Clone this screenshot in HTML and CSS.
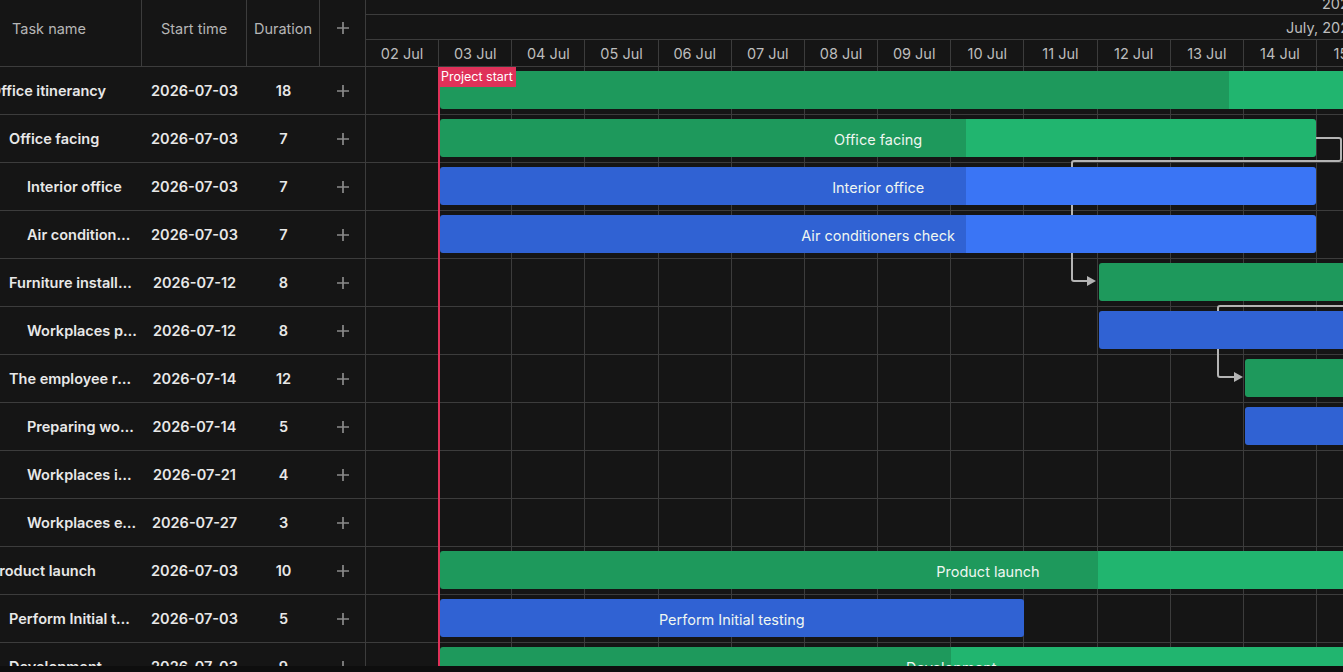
FILE: index.html
```
<!DOCTYPE html>
<html lang="en">
<head>
    <meta charset="UTF-8">
    <meta name="viewport" content="width=device-width, initial-scale=1.0">
    <title>Gantt</title>
    <link rel="stylesheet" href="styles.css">
</head>
<body>
    <div class="gantt">
        <div class="grid">
            <div class="grid-header">
                <div class="col col-name">Task name</div>
                <div class="col col-start">Start time</div>
                <div class="col col-dur">Duration</div>
                <div class="col col-add">
                    <svg class="plus" width="14" height="14" viewBox="0 0 14 14"><path d="M7 1v12M1 7h12"/></svg>
                </div>
            </div>
            <div class="grid-body" id="gridBody"></div>
        </div>

        <div class="chart">
            <div class="scale">
                <div class="scale-row scale-year"><span>2026</span></div>
                <div class="scale-row scale-month"><span>July, 2026</span></div>
                <div class="scale-row scale-days" id="scaleDays"></div>
            </div>
            <div class="chart-body" id="chartBody">
                <svg class="links" width="1200" height="640">
                    <path d="M950 71H973Q975 71 975 73V92Q975 94 973 94H708Q706 94 706 96V212Q706 214 708 214H722"/>
                    <polygon points="721,209 730,214 721,219"/>
                    <path d="M990 239H854Q852 239 852 241V308Q852 310 854 310H869"/>
                    <polygon points="868,305 877,310 868,315"/>
                </svg>
                <div class="marker"><span>Project start</span></div>
            </div>
        </div>
    </div>

    <script>
        const DAY = 73.17;
        const DAYS = 16;

        // from / to are day offsets from 02 Jul, p is progress in %
        const tasks = [
            { name: "Office itinerancy", start: "2026-07-03", dur: 18, lvl: 0, type: "summary", from: 1, to: 30, p: 37.2 },
            { name: "Office facing", start: "2026-07-03", dur: 7, lvl: 1, type: "summary", from: 1, to: 13, p: 60 },
            { name: "Interior office", start: "2026-07-03", dur: 7, lvl: 2, type: "task", from: 1, to: 13, p: 60 },
            { name: "Air conditioners check", start: "2026-07-03", dur: 7, lvl: 2, type: "task", from: 1, to: 13, p: 60 },
            { name: "Furniture installation", start: "2026-07-12", dur: 8, lvl: 1, type: "summary", from: 10, to: 20, p: 60 },
            { name: "Workplaces preparation", start: "2026-07-12", dur: 8, lvl: 2, type: "task", from: 10, to: 20, p: 60 },
            { name: "The employee relocation", start: "2026-07-14", dur: 12, lvl: 1, type: "summary", from: 12, to: 24, p: 40 },
            { name: "Preparing workplaces", start: "2026-07-14", dur: 5, lvl: 2, type: "task", from: 12, to: 18, p: 50 },
            { name: "Workplaces importation", start: "2026-07-21", dur: 4, lvl: 2, type: "task", from: 19, to: 23, p: 0 },
            { name: "Workplaces exportation", start: "2026-07-27", dur: 3, lvl: 2, type: "task", from: 25, to: 28, p: 0 },
            { name: "Product launch", start: "2026-07-03", dur: 10, lvl: 0, type: "summary", from: 1, to: 16, p: 60 },
            { name: "Perform Initial testing", start: "2026-07-03", dur: 5, lvl: 1, type: "task", from: 1, to: 9, p: 100 },
            { name: "Development", start: "2026-07-03", dur: 9, lvl: 1, type: "summary", from: 1, to: 15, p: 50 }
        ];

        const plusIcon = '<svg class="plus" width="14" height="14" viewBox="0 0 14 14"><path d="M7 1v12M1 7h12"/></svg>';

        const gridBody = document.getElementById('gridBody');
        const chartBody = document.getElementById('chartBody');
        const scaleDays = document.getElementById('scaleDays');

        for (let d = 0; d < DAYS; d++) {
            const cell = document.createElement('div');
            cell.className = 'day';
            cell.textContent = String(d + 2).padStart(2, '0') + ' Jul';
            scaleDays.appendChild(cell);
        }

        tasks.forEach(t => {
            const row = document.createElement('div');
            row.className = 'grid-row';
            row.innerHTML =
                '<div class="col col-name lvl-' + t.lvl + '">' + t.name + '</div>' +
                '<div class="col col-start">' + t.start + '</div>' +
                '<div class="col col-dur">' + t.dur + '</div>' +
                '<div class="col col-add">' + plusIcon + '</div>';
            gridBody.appendChild(row);

            const line = document.createElement('div');
            line.className = 'chart-row';
            for (let d = 0; d < DAYS; d++) {
                const cell = document.createElement('div');
                cell.className = 'day';
                line.appendChild(cell);
            }
            const bar = document.createElement('div');
            bar.className = 'bar ' + t.type;
            bar.style.left = (t.from * DAY + 1) + 'px';
            bar.style.width = ((t.to - t.from) * DAY - 2) + 'px';
            bar.style.setProperty('--p', t.p + '%');
            bar.textContent = t.name;
            line.appendChild(bar);
            chartBody.appendChild(line);
        });
    </script>
</body>
</html>
```

FILE: styles.css
```
body {
    margin: 0;
    background-color: #0e0e0e;
    color: #e8e8e8;
    font-family: Inter, "Noto Sans", sans-serif;
    font-size: 14.5px;
    overflow: hidden;
}
.gantt {
    display: flex;
    height: 666px;
    background-color: #151515;
    overflow: hidden;
}
.grid {
    width: 366px;
    flex-shrink: 0;
    border-right: 1px solid #3c3c3c;
    box-sizing: border-box;
}
.grid-header {
    display: flex;
    height: 67px;
    border-bottom: 1px solid #3c3c3c;
    box-sizing: border-box;
    color: #b6b6b6;
}
.grid-header .col {
    display: flex;
    align-items: center;
    padding-bottom: 10px;
    border-right: 1px solid #3c3c3c;
}
.grid-header .col-add {
    border-right: none;
}
.col {
    box-sizing: border-box;
    flex-shrink: 0;
}
.col-name {
    width: 142px;
    padding-left: 12px;
}
.col-start {
    width: 105px;
    justify-content: center;
    text-align: center;
}
.col-dur {
    width: 73px;
    justify-content: center;
    text-align: center;
}
.col-add {
    width: 45px;
    display: flex;
    justify-content: center;
    align-items: center;
}
.plus {
    display: block;
    fill: none;
    stroke: #8a8a8a;
    stroke-width: 1.7;
}
.grid-row {
    display: flex;
    align-items: center;
    height: 48px;
    border-bottom: 1px solid #3c3c3c;
    box-sizing: border-box;
    font-weight: 600;
}
.grid-row .col-name {
    padding-left: 0;
    padding-right: 4px;
    white-space: nowrap;
    overflow: hidden;
    text-overflow: ellipsis;
}
.lvl-0 { text-indent: -10px; }
.lvl-1 { text-indent: 9px; }
.lvl-2 { text-indent: 27px; }

.chart {
    flex: 1;
    min-width: 0;
    overflow: hidden;
}
.scale {
    color: #bdbdbd;
}
.scale-row {
    border-bottom: 1px solid #3c3c3c;
    box-sizing: border-box;
    white-space: nowrap;
    overflow: hidden;
}
.scale-year {
    height: 15px;
}
.scale-year span {
    display: block;
    line-height: 15px;
    margin-top: -4px;
    padding-left: 956px;
}
.scale-month {
    height: 25px;
    line-height: 25px;
    padding-left: 920px;
}
.scale-days {
    height: 27px;
    display: grid;
    grid-template-columns: repeat(16, 73.17px);
    line-height: 28px;
}
.scale-days .day {
    text-align: center;
}
.day {
    border-right: 1px solid #3c3c3c;
}
.chart-body {
    position: relative;
    z-index: 0;
}
.chart-row {
    position: relative;
    display: grid;
    grid-template-columns: repeat(16, 73.17px);
    height: 48px;
    border-bottom: 1px solid #3c3c3c;
    box-sizing: border-box;
}
.bar {
    position: absolute;
    top: 4px;
    height: 38px;
    padding-top: 2px;
    box-sizing: border-box;
    border-radius: 3px;
    z-index: 2;
    display: flex;
    align-items: center;
    justify-content: center;
    white-space: nowrap;
    overflow: hidden;
    color: #eef6f1;
}
.bar.summary {
    background: linear-gradient(to right, #1e995c var(--p), #21b56f var(--p));
}
.bar.task {
    background: linear-gradient(to right, #3062d3 var(--p), #3a75f5 var(--p));
}
.links {
    position: absolute;
    left: 0;
    top: 0;
    z-index: 1;
}
.links path {
    fill: none;
    stroke: #b4b4b4;
    stroke-width: 2;
}
.links polygon {
    fill: #b4b4b4;
}
.marker {
    position: absolute;
    left: 72px;
    top: 0;
    bottom: 0;
    width: 2px;
    background-color: #df3159;
    z-index: 3;
}
.marker span {
    position: absolute;
    left: 0;
    top: 0;
    padding: 2px 3px;
    line-height: 16px;
    font-size: 12.5px;
    color: #fff;
    background-color: #df3159;
    white-space: nowrap;
}
```
